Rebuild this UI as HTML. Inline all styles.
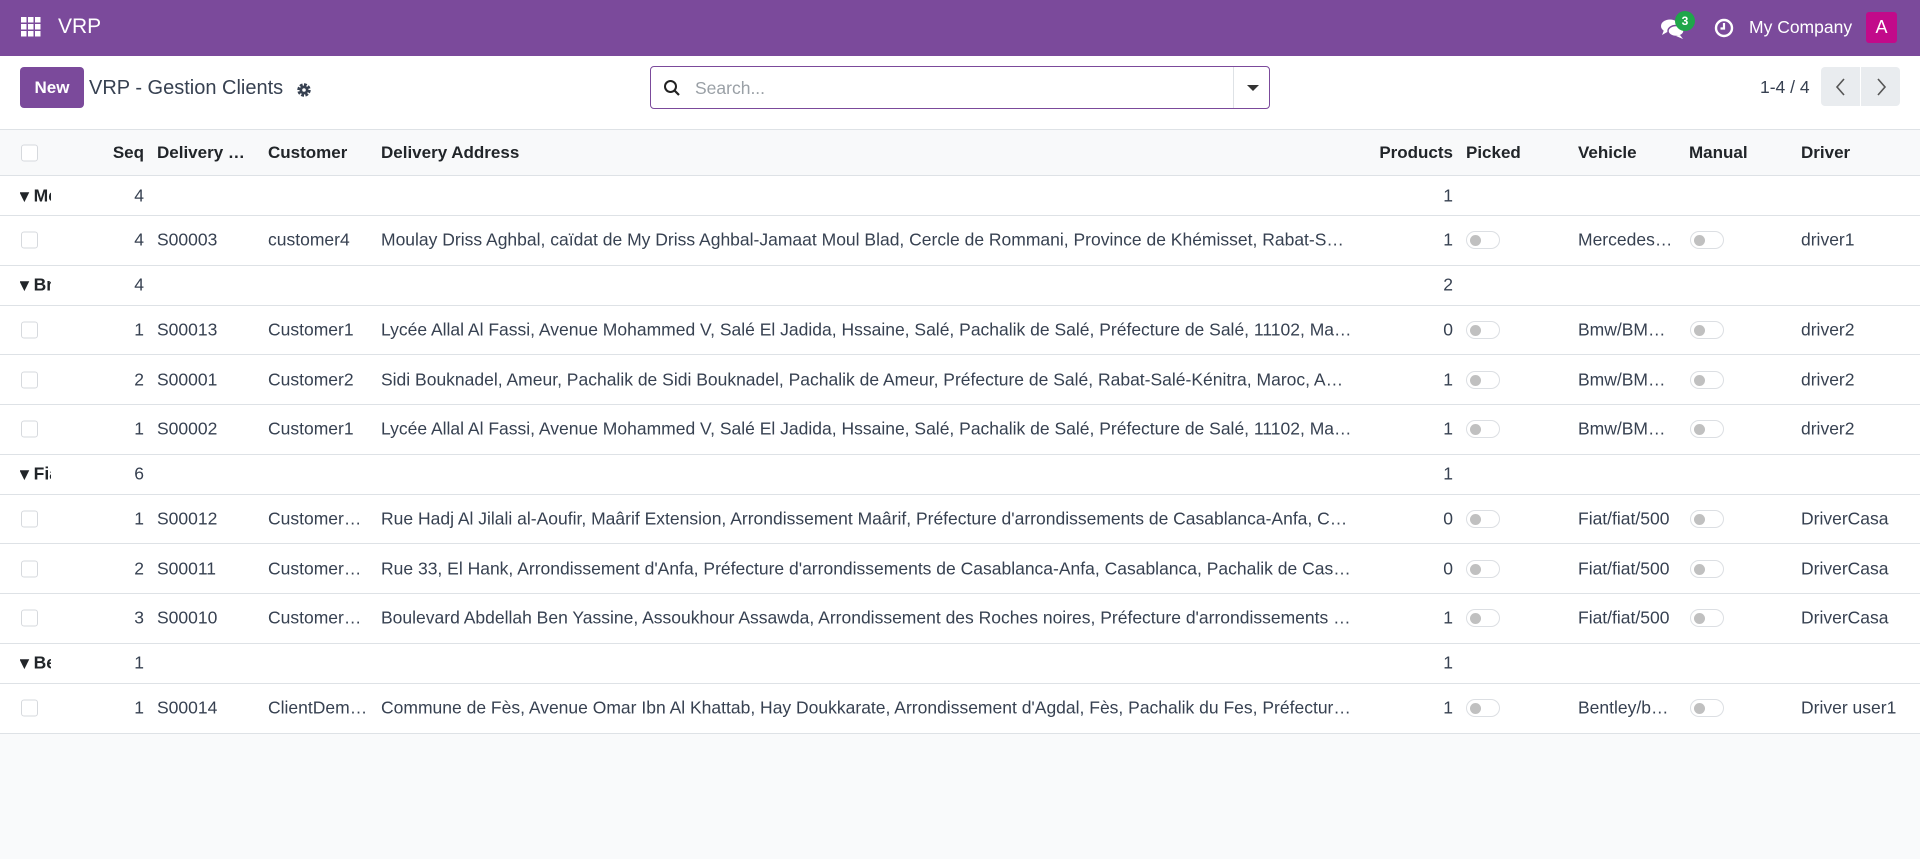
<!DOCTYPE html>
<html><head><meta charset="utf-8"><style>
*{box-sizing:border-box;margin:0;padding:0}
body{width:1920px;height:859px;overflow:hidden;background:#f9fafb;font-family:"Liberation Sans",sans-serif;color:#374151;font-size:17.5px}
.nav{height:56px;background:#7b4a9b;position:relative;color:#fff}
.cp{height:73px;background:#fff;position:relative}
.row{position:relative;background:#fff;border-bottom:1px solid #dee2e6}
.row span{position:absolute;top:50%;transform:translateY(-50%);white-space:nowrap;overflow:hidden;text-overflow:ellipsis}
.hdr{height:47px;background:#f8f9fa;border-top:1px solid #dee2e6;font-weight:bold;color:#212529;font-size:17px}
.grp{height:40px}
.dat{height:49.7px}
.cb{width:17px;height:17px;border:1px solid #d6d9dd;border-radius:3px;left:21px;background:#fff}
.r{text-align:right}
.tg{width:34px;height:18px;border:1px solid #dcdfe3;border-radius:9px;background:#fff}
.tg::after{content:"";position:absolute;left:3px;top:3px;width:11px;height:11px;border-radius:50%;background:#c0c0c0}
.gn{left:20px;width:31px;font-weight:bold;color:#212529;text-overflow:clip!important}
</style></head><body>
<div class="nav">
 <svg style="position:absolute;left:21px;top:17px" width="20" height="20" viewBox="0 0 20 20" fill="#fff"><rect x="0" y="0" width="5.5" height="5.5"/><rect x="7" y="0" width="5.5" height="5.5"/><rect x="14" y="0" width="5.5" height="5.5"/><rect x="0" y="7" width="5.5" height="5.5"/><rect x="7" y="7" width="5.5" height="5.5"/><rect x="14" y="7" width="5.5" height="5.5"/><rect x="0" y="14" width="5.5" height="5.5"/><rect x="7" y="14" width="5.5" height="5.5"/><rect x="14" y="14" width="5.5" height="5.5"/></svg>
 <div style="position:absolute;left:58px;top:15px;font-size:21px">VRP</div>
 <svg style="position:absolute;left:1660px;top:18px" width="26" height="22" viewBox="0 0 26 22" fill="#fff"><ellipse cx="10" cy="8" rx="9" ry="6.5"/><path d="M4 12 L2 17 L9 13Z"/><ellipse cx="16" cy="13" rx="8" ry="5.5" fill="#fff" stroke="#7b4a9b" stroke-width="1.5"/><path d="M20 17 L23 21 L16 18Z"/></svg>
 <div style="position:absolute;left:1675px;top:11px;width:20px;height:20px;border-radius:10px;background:#1fa64a;color:#fff;font-size:12px;font-weight:bold;text-align:center;line-height:20px">3</div>
 <svg style="position:absolute;left:1714px;top:18px" width="20" height="20" viewBox="0 0 20 20"><circle cx="10" cy="10" r="8" fill="none" stroke="#fff" stroke-width="2.4"/><path d="M10 5v5.5H6.5" fill="none" stroke="#fff" stroke-width="2.2"/></svg>
 <div style="position:absolute;left:1749px;top:17px;font-size:17.5px">My Company</div>
 <div style="position:absolute;left:1866px;top:12px;width:31px;height:31px;border-radius:3px;background:#c20a8a;color:#fff;text-align:center;line-height:31px;font-size:18px">A</div>
</div>
<div class="cp">
 <div style="position:absolute;left:20px;top:11px;width:64px;height:41px;background:#7b4a9b;color:#fff;border-radius:4px;font-weight:bold;text-align:center;line-height:41px;font-size:17px">New</div>
 <div style="position:absolute;left:89px;top:21px;font-size:20px;color:#374151">VRP - Gestion Clients</div>
 <svg style="position:absolute;left:296px;top:26px" width="16" height="16" viewBox="0 0 16 16"><circle cx="8" cy="8" r="5" fill="none" stroke="#374151" stroke-width="3.5" stroke-dasharray="2.6 1.3"/><circle cx="8" cy="8" r="4.5" fill="#374151"/><circle cx="8" cy="8" r="1.8" fill="#fff"/></svg>
 <div style="position:absolute;left:650px;top:10px;width:620px;height:43px;border:1px solid #7b4a9b;border-radius:4px;background:#fff">
  <svg style="position:absolute;left:12px;top:12px" width="18" height="18" viewBox="0 0 18 18"><circle cx="7.5" cy="7.5" r="5.5" fill="none" stroke="#222" stroke-width="2"/><path d="M11.5 11.5L16 16" stroke="#222" stroke-width="2.2"/></svg>
  <div style="position:absolute;left:44px;top:11px;color:#9aa0a6;font-size:17.5px">Search...</div>
  <div style="position:absolute;left:582px;top:0;width:1px;height:41px;background:#dee2e6"></div>
  <div style="position:absolute;left:596px;top:18px;width:0;height:0;border-left:6px solid transparent;border-right:6px solid transparent;border-top:6px solid #333"></div>
 </div>
 <div style="position:absolute;left:1760px;top:21px;font-size:17.5px">1-4 / 4</div>
 <div style="position:absolute;left:1821px;top:11px;width:39px;height:39px;background:#e9ecef;border-radius:4px 0 0 4px"></div>
 <div style="position:absolute;left:1861px;top:11px;width:39px;height:39px;background:#e9ecef;border-radius:0 4px 4px 0"></div>
 <svg style="position:absolute;left:1832px;top:21px" width="18" height="20" viewBox="0 0 18 20"><path d="M12 2L5 10l7 8" fill="none" stroke="#555" stroke-width="1.6"/></svg>
 <svg style="position:absolute;left:1872px;top:21px" width="18" height="20" viewBox="0 0 18 20"><path d="M6 2l7 8-7 8" fill="none" stroke="#555" stroke-width="1.6"/></svg>
</div>

<div class="row hdr"><span class="cb"></span><span class="r" style="left:100px;width:44px">Seq</span><span style="left:157px;width:100px">Delivery Order</span><span style="left:268px">Customer</span><span style="left:381px">Delivery Address</span><span class="r" style="left:1360px;width:93px">Products</span><span style="left:1466px">Picked</span><span style="left:1578px">Vehicle</span><span style="left:1689px">Manual</span><span style="left:1801px">Driver</span></div>

<div class="row grp"><span class="gn">▾ Mercedes</span><span class="r" style="left:100px;width:44px">4</span><span class="r" style="left:1360px;width:93px">1</span></div>
<div class="row dat"><span class="cb"></span><span class="r" style="left:100px;width:44px">4</span><span style="left:157px">S00003</span><span style="left:268px;width:105px">customer4</span><span style="left:381px;width:972px">Moulay Driss Aghbal, caïdat de My Driss Aghbal-Jamaat Moul Blad, Cercle de Rommani, Province de Khémisset, Rabat-Salé-Kénitra, Maroc</span><span class="r" style="left:1360px;width:93px">1</span><span class="tg" style="left:1466px"></span><span style="left:1578px;width:98px">Mercedes/benz</span><span class="tg" style="left:1690px"></span><span style="left:1801px">driver1</span></div>

<div class="row grp"><span class="gn">▾ Bmw</span><span class="r" style="left:100px;width:44px">4</span><span class="r" style="left:1360px;width:93px">2</span></div>
<div class="row dat"><span class="cb"></span><span class="r" style="left:100px;width:44px">1</span><span style="left:157px">S00013</span><span style="left:268px;width:105px">Customer1</span><span style="left:381px;width:972px">Lycée Allal Al Fassi, Avenue Mohammed V, Salé El Jadida, Hssaine, Salé, Pachalik de Salé, Préfecture de Salé, 11102, Maroc, Rabat</span><span class="r" style="left:1360px;width:93px">0</span><span class="tg" style="left:1466px"></span><span style="left:1578px;width:98px">Bmw/BMW X5</span><span class="tg" style="left:1690px"></span><span style="left:1801px">driver2</span></div>
<div class="row dat"><span class="cb"></span><span class="r" style="left:100px;width:44px">2</span><span style="left:157px">S00001</span><span style="left:268px;width:105px">Customer2</span><span style="left:381px;width:972px">Sidi Bouknadel, Ameur, Pachalik de Sidi Bouknadel, Pachalik de Ameur, Préfecture de Salé, Rabat-Salé-Kénitra, Maroc, Ameur, Salé</span><span class="r" style="left:1360px;width:93px">1</span><span class="tg" style="left:1466px"></span><span style="left:1578px;width:98px">Bmw/BMW X5</span><span class="tg" style="left:1690px"></span><span style="left:1801px">driver2</span></div>
<div class="row dat"><span class="cb"></span><span class="r" style="left:100px;width:44px">1</span><span style="left:157px">S00002</span><span style="left:268px;width:105px">Customer1</span><span style="left:381px;width:972px">Lycée Allal Al Fassi, Avenue Mohammed V, Salé El Jadida, Hssaine, Salé, Pachalik de Salé, Préfecture de Salé, 11102, Maroc, Rabat</span><span class="r" style="left:1360px;width:93px">1</span><span class="tg" style="left:1466px"></span><span style="left:1578px;width:98px">Bmw/BMW X5</span><span class="tg" style="left:1690px"></span><span style="left:1801px">driver2</span></div>

<div class="row grp"><span class="gn">▾ Fiat</span><span class="r" style="left:100px;width:44px">6</span><span class="r" style="left:1360px;width:93px">1</span></div>
<div class="row dat"><span class="cb"></span><span class="r" style="left:100px;width:44px">1</span><span style="left:157px">S00012</span><span style="left:268px;width:105px">CustomerCasa3</span><span style="left:381px;width:972px">Rue Hadj Al Jilali al-Aoufir, Maârif Extension, Arrondissement Maârif, Préfecture d'arrondissements de Casablanca-Anfa, Casablanca</span><span class="r" style="left:1360px;width:93px">0</span><span class="tg" style="left:1466px"></span><span style="left:1578px;width:98px">Fiat/fiat/500</span><span class="tg" style="left:1690px"></span><span style="left:1801px">DriverCasa</span></div>
<div class="row dat"><span class="cb"></span><span class="r" style="left:100px;width:44px">2</span><span style="left:157px">S00011</span><span style="left:268px;width:105px">CustomerCasa2</span><span style="left:381px;width:972px">Rue 33, El Hank, Arrondissement d'Anfa, Préfecture d'arrondissements de Casablanca-Anfa, Casablanca, Pachalik de Casablanca</span><span class="r" style="left:1360px;width:93px">0</span><span class="tg" style="left:1466px"></span><span style="left:1578px;width:98px">Fiat/fiat/500</span><span class="tg" style="left:1690px"></span><span style="left:1801px">DriverCasa</span></div>
<div class="row dat"><span class="cb"></span><span class="r" style="left:100px;width:44px">3</span><span style="left:157px">S00010</span><span style="left:268px;width:105px">CustomerCasa1</span><span style="left:381px;width:972px">Boulevard Abdellah Ben Yassine, Assoukhour Assawda, Arrondissement des Roches noires, Préfecture d'arrondissements de Casablanca</span><span class="r" style="left:1360px;width:93px">1</span><span class="tg" style="left:1466px"></span><span style="left:1578px;width:98px">Fiat/fiat/500</span><span class="tg" style="left:1690px"></span><span style="left:1801px">DriverCasa</span></div>

<div class="row grp"><span class="gn">▾ Bentley</span><span class="r" style="left:100px;width:44px">1</span><span class="r" style="left:1360px;width:93px">1</span></div>
<div class="row dat"><span class="cb"></span><span class="r" style="left:100px;width:44px">1</span><span style="left:157px">S00014</span><span style="left:268px;width:105px">ClientDemoFes</span><span style="left:381px;width:972px">Commune de Fès, Avenue Omar Ibn Al Khattab, Hay Doukkarate, Arrondissement d'Agdal, Fès, Pachalik du Fes, Préfecture de Fès</span><span class="r" style="left:1360px;width:93px">1</span><span class="tg" style="left:1466px"></span><span style="left:1578px;width:98px">Bentley/bentley</span><span class="tg" style="left:1690px"></span><span style="left:1801px">Driver user1</span></div>
</body></html>
